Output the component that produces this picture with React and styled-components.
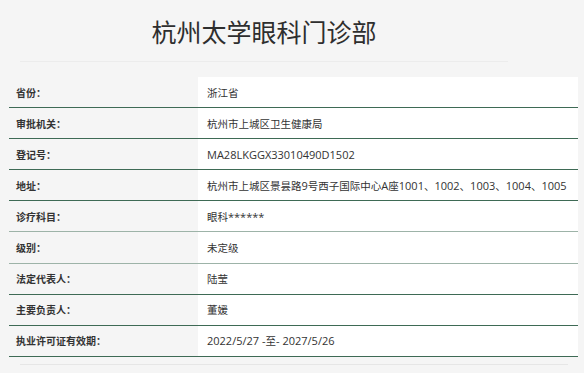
import styled, { createGlobalStyle } from "styled-components";

const GlobalStyle = createGlobalStyle`
    html, body {
        margin: 0;
        padding: 0;
        background-color: #f5f5f5;
    }
    body {
        font-family: "Open Sans", "Noto Sans CJK SC", sans-serif;
        color: #333333;
    }
`

const rows = [
    { label: "省份：", value: "浙江省" },
    { label: "审批机关：", value: "杭州市上城区卫生健康局" },
    { label: "登记号：", value: "MA28LKGGX33010490D1502" },
    { label: "地址：", value: "杭州市上城区景昙路9号西子国际中心A座1001、1002、1003、1004、1005" },
    { label: "诊疗科目：", value: "眼科******", light: true },
    { label: "级别：", value: "未定级", light: true },
    { label: "法定代表人：", value: "陆莹" },
    { label: "主要负责人：", value: "董媛" },
    { label: "执业许可证有效期：", value: "2022/5/27 -至- 2027/5/26" }
];

// chinese runs get the cjk font and size, latin stays in open sans
function Mixed({ text }) {
    const parts = text.split(/([\u3000-\u303f\u4e00-\u9fff\uff00-\uffef]+)/).filter(Boolean);
    return parts.map((part, i) =>
        /[\u3000-\u303f\u4e00-\u9fff\uff00-\uffef]/.test(part)
            ? <Han key={i}>{part}</Han>
            : <span key={i}>{part}</span>
    );
}

export default function App() {
    return (
        <Page>
            <GlobalStyle />
            <Header>
                <Title>杭州太学眼科门诊部</Title>
            </Header>
            <Table>
                {rows.map((row) => (
                    <Row key={row.label} $light={row.light}>
                        <Label>{row.label}</Label>
                        <Value><Mixed text={row.value} /></Value>
                    </Row>
                ))}
            </Table>
            <Footer />
        </Page>
    );
}

const Page = styled.div`
    width: 584px;
    height: 373px;
    overflow: hidden;
    padding-top: 11px;
    box-sizing: border-box;
`

const Header = styled.div`
    width: 488px;
    margin-left: 20px;
    height: 50px;
    border-bottom: 1px solid #ececec;
    display: flex;
    justify-content: center;
`

const Title = styled.h1`
    margin: 0;
    font-family: "Noto Sans CJK SC", sans-serif;
    font-size: 25px;
    font-weight: 400;
    line-height: 40px;
    color: #2e2e2e;
`

const Table = styled.div`
    margin-top: 15px;
    margin-left: 9px;
    width: 569px;
    display: flex;
    flex-direction: column;
`

const Row = styled.div`
    display: grid;
    grid-template-columns: 189px 1fr;
    height: 31.1px;
    box-sizing: border-box;
    border-bottom: 1.5px solid ${(p) => (p.$light ? "#9db3a8" : "#3e6a55")};
`

const Label = styled.div`
    display: flex;
    align-items: center;
    padding-left: 7px;
    font-family: "Noto Sans CJK SC", sans-serif;
    font-size: 10px;
    font-weight: 700;
    color: #333333;
`

const Value = styled.div`
    display: flex;
    align-items: center;
    padding-left: 9px;
    background-color: #ffffff;
    font-family: "Open Sans", "Noto Sans CJK SC", sans-serif;
    font-size: 11px;
    color: #333333;
    white-space: pre;
    overflow: hidden;
`

const Han = styled.span`
    font-family: "Noto Sans CJK SC", sans-serif;
    font-size: 10.5px;
`

const Footer = styled.div`
    margin-top: 7px;
    margin-left: 20px;
    width: 548px;
    border-top: 1px solid #e6e6e6;
`
